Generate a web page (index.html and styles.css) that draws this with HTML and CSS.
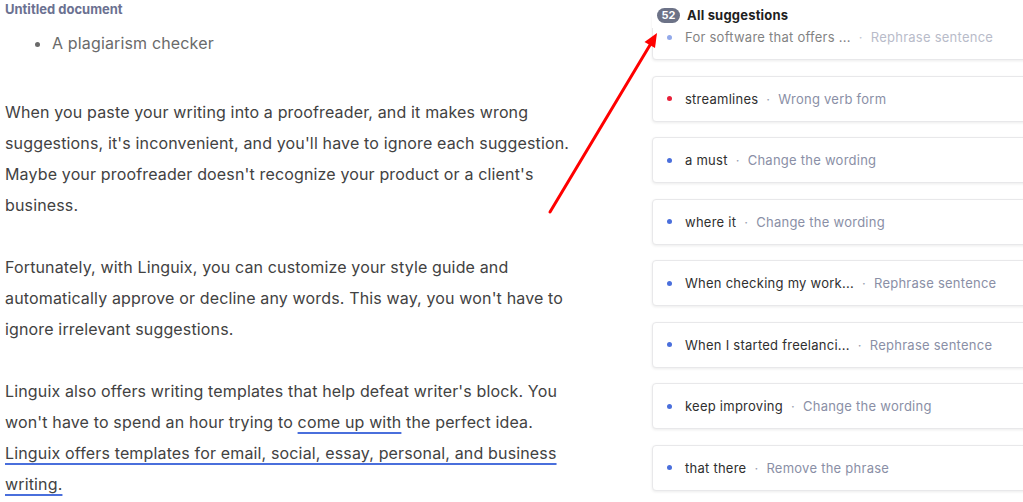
FILE: index.html
```html
<!DOCTYPE html>
<html>
<head>
<meta charset="utf-8">
<link rel="stylesheet" href="styles.css">
</head>
<body>
<div class="page">
  <main class="doc">
    <div class="doc-title">Untitled document</div>
    <ul class="doc-list"><li>A plagiarism checker</li></ul>
    <p>When you paste your writing into a proofreader, and it makes wrong suggestions, it's inconvenient, and you'll have to ignore each suggestion. Maybe your proofreader doesn't recognize your product or a client's business.</p>
    <p>Fortunately, with Linguix, you can customize your style guide and automatically approve or decline any words. This way, you won't have to ignore irrelevant suggestions.</p>
    <p>Linguix also offers writing templates that help defeat writer's block. You won't have to spend an hour trying to <span class="mark">come up with</span> the perfect idea. <span class="mark">Linguix offers templates for email, social, essay, personal, and business writing.</span></p>
  </main>
  <aside class="panel">
    <div class="panel-head"><span class="badge">52</span><span class="head-title">All suggestions</span></div>
    <div class="cards">
      <div class="card faded"><span class="dot"></span><span class="word">For software that offers ...</span><span class="sep">·</span><span class="kind">Rephrase sentence</span></div>
      <div class="card"><span class="dot red"></span><span class="word">streamlines</span><span class="sep">·</span><span class="kind">Wrong verb form</span></div>
      <div class="card"><span class="dot"></span><span class="word">a must</span><span class="sep">·</span><span class="kind">Change the wording</span></div>
      <div class="card"><span class="dot"></span><span class="word">where it</span><span class="sep">·</span><span class="kind">Change the wording</span></div>
      <div class="card"><span class="dot"></span><span class="word">When checking my work...</span><span class="sep">·</span><span class="kind">Rephrase sentence</span></div>
      <div class="card"><span class="dot"></span><span class="word">When I started freelanci...</span><span class="sep">·</span><span class="kind">Rephrase sentence</span></div>
      <div class="card"><span class="dot"></span><span class="word">keep improving</span><span class="sep">·</span><span class="kind">Change the wording</span></div>
      <div class="card"><span class="dot"></span><span class="word">that there</span><span class="sep">·</span><span class="kind">Remove the phrase</span></div>
    </div>
  </aside>
  <svg class="arrow" width="1023" height="502" viewBox="0 0 1023 502">
    <line x1="550" y1="212" x2="650" y2="45" stroke="#f00" stroke-width="3" stroke-linecap="round"/>
    <polygon points="657,33 655,48 644.5,42" fill="#f00"/>
  </svg>
</div>
</body>
</html>
```

FILE: styles.css
```css
html, body {
  margin: 0;
  padding: 0;
  background: #fff;
  overflow: hidden;
}
body {
  width: 1023px;
  height: 502px;
  font-family: Inter, "Noto Sans", sans-serif;
}
.page {
  position: relative;
  display: flex;
  width: 1023px;
  height: 502px;
  overflow: hidden;
}
.doc {
  width: 647px;
  flex: none;
  padding-left: 5px;
}
.doc-title {
  font-size: 13px;
  font-weight: 700;
  line-height: 18px;
  color: #6b7191;
}
.doc-list {
  margin: 9.5px 0 0;
  padding-left: 47px;
  font-size: 16px;
  line-height: 31px;
  color: #6a6a6a;
  letter-spacing: 0.15px;
}
.doc p {
  width: 572px;
  margin: 38px 0 0;
  font-size: 16px;
  line-height: 31px;
  color: #424242;
  letter-spacing: 0.15px;
}
.doc p + p {
  margin-top: 31px;
}
.mark {
  text-decoration: underline;
  text-decoration-color: #4a6fdc;
  text-decoration-thickness: 2px;
  text-underline-offset: 4px;
}
.panel {
  flex: none;
  width: 371px;
}
.panel-head {
  position: relative;
  z-index: 1;
  height: 28px;
  display: flex;
  align-items: center;
  padding: 2px 0 0 5px;
  box-sizing: border-box;
  background: #fff;
}
.badge {
  display: inline-flex;
  align-items: center;
  justify-content: center;
  width: 23px;
  height: 15px;
  border-radius: 8px;
  background: #6c7287;
  color: #fff;
  font-size: 11px;
  font-weight: 700;
}
.head-title {
  margin-left: 7px;
  font-size: 13px;
  font-weight: 700;
  color: #1f1f1f;
  letter-spacing: 0.2px;
}
.cards {
  display: flex;
  flex-direction: column;
  gap: 15.5px;
  margin-top: -14px;
}
.card {
  height: 46px;
  width: 400px;
  box-sizing: border-box;
  display: flex;
  align-items: center;
  padding-left: 14px;
  border: 1px solid #e8e8ea;
  border-radius: 4px;
  box-shadow: 0 1px 3px rgba(0, 0, 0, 0.08);
  background: #fff;
  font-size: 13px;
  letter-spacing: 0.25px;
  white-space: nowrap;
}
.dot {
  width: 5px;
  height: 5px;
  border-radius: 50%;
  background: #4a6fdc;
  margin-right: 13px;
  flex: none;
}
.dot.red {
  background: #e8203a;
}
.word {
  color: #2f2f2f;
}
.sep {
  color: #9a9fb2;
  margin: 0 8px;
}
.kind {
  color: #8a8fa6;
}
.faded .word,
.faded .kind,
.faded .sep,
.faded .dot {
  opacity: 0.6;
}
.arrow {
  position: absolute;
  left: 0;
  top: 0;
  z-index: 2;
  pointer-events: none;
}
```
